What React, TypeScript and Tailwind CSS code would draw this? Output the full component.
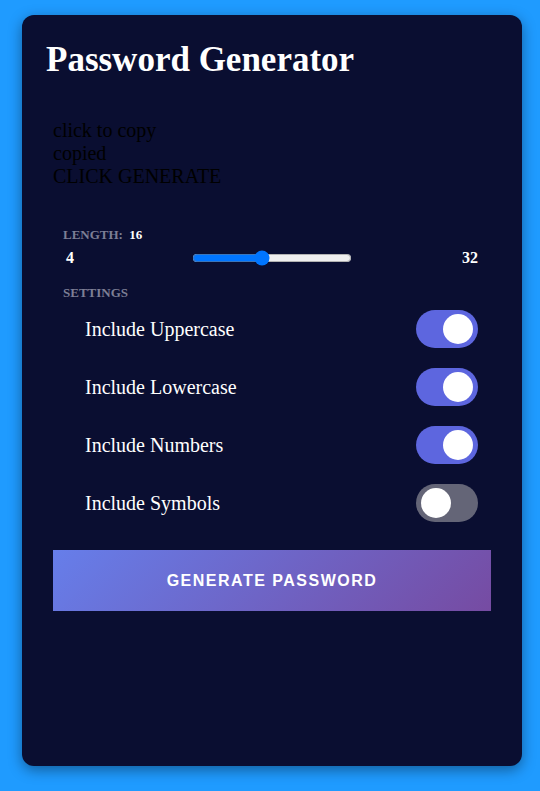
import React, { useState } from 'react';

const OPTIONS = [
  { key: 'upper', label: 'Include Uppercase', on: true },
  { key: 'lower', label: 'Include Lowercase', on: true },
  { key: 'numbers', label: 'Include Numbers', on: true },
  { key: 'symbols', label: 'Include Symbols', on: false },
];

const Toggle = ({ on, onClick }: { on: boolean; onClick: () => void }) => (
  <button
    onClick={onClick}
    className={
      'relative w-[62px] h-[38px] rounded-full shrink-0 ' +
      (on ? 'bg-[#5d66df]' : 'bg-[#646577]')
    }
  >
    <span
      className={
        'absolute top-[4px] w-[30px] h-[30px] rounded-full bg-white ' +
        (on ? 'left-[27px]' : 'left-[5px]')
      }
    />
  </button>
);

const App = () => {
  const [length, setLength] = useState(16);
  const [settings, setSettings] = useState(OPTIONS);

  const flip = (key: string) =>
    setSettings(s => s.map(o => (o.key === key ? { ...o, on: !o.on } : o)));

  return (
    <div className="min-h-screen bg-[#1f9bff] pt-[15px] pl-[22px] font-['Liberation_Serif',serif]">
      <div className="w-[500px] h-[751px] rounded-[12px] bg-[#0a0e31] shadow-[0_4px_14px_rgba(0,0,0,0.4)] pt-[25px] px-[24px]">
        <h1 className="text-[35px] leading-[40px] font-bold text-white">Password Generator</h1>

        {/* result area */}
        <div className="mt-[39px] pl-[7px] text-[20px] leading-[23px] text-black">
          <div>click to copy</div>
          <div>copied</div>
          <div>CLICK GENERATE</div>
        </div>

        {/* length */}
        <div className="mt-[39px] pl-[17px] pr-[20px]">
          <div className="text-[13px] leading-[15px] font-bold text-[#7d7f95]">
            LENGTH: <span className="ml-[3px] text-white">{length}</span>
          </div>
          <div className="flex items-center h-[20px] mt-[6px] text-[16px] font-bold text-white">
            <span className="ml-[3px]">4</span>
            <input
              type="range"
              min={4}
              max={32}
              value={length}
              onChange={e => setLength(Number(e.target.value))}
              className="ml-[118px] w-[160px]"
            />
            <span className="ml-auto">32</span>
          </div>
          <div className="mt-[17px] text-[13px] leading-[15px] font-bold text-[#7d7f95]">SETTINGS</div>
        </div>

        {/* settings */}
        <div className="mt-[10px] pl-[39px] pr-[20px] flex flex-col gap-[20px]">
          {settings.map(o => (
            <div key={o.key} className="flex items-center justify-between">
              <span className="text-[20px] text-white">{o.label}</span>
              <Toggle on={o.on} onClick={() => flip(o.key)} />
            </div>
          ))}
        </div>

        <div className="mt-[28px] px-[7px]">
          <button className="w-full h-[61px] bg-[linear-gradient(135deg,#667eea,#764ba2)] text-white font-['Liberation_Sans',Arial,sans-serif] font-bold text-[16px] tracking-[1.5px]">
            GENERATE PASSWORD
          </button>
        </div>
      </div>
    </div>
  );
};

export default App;
